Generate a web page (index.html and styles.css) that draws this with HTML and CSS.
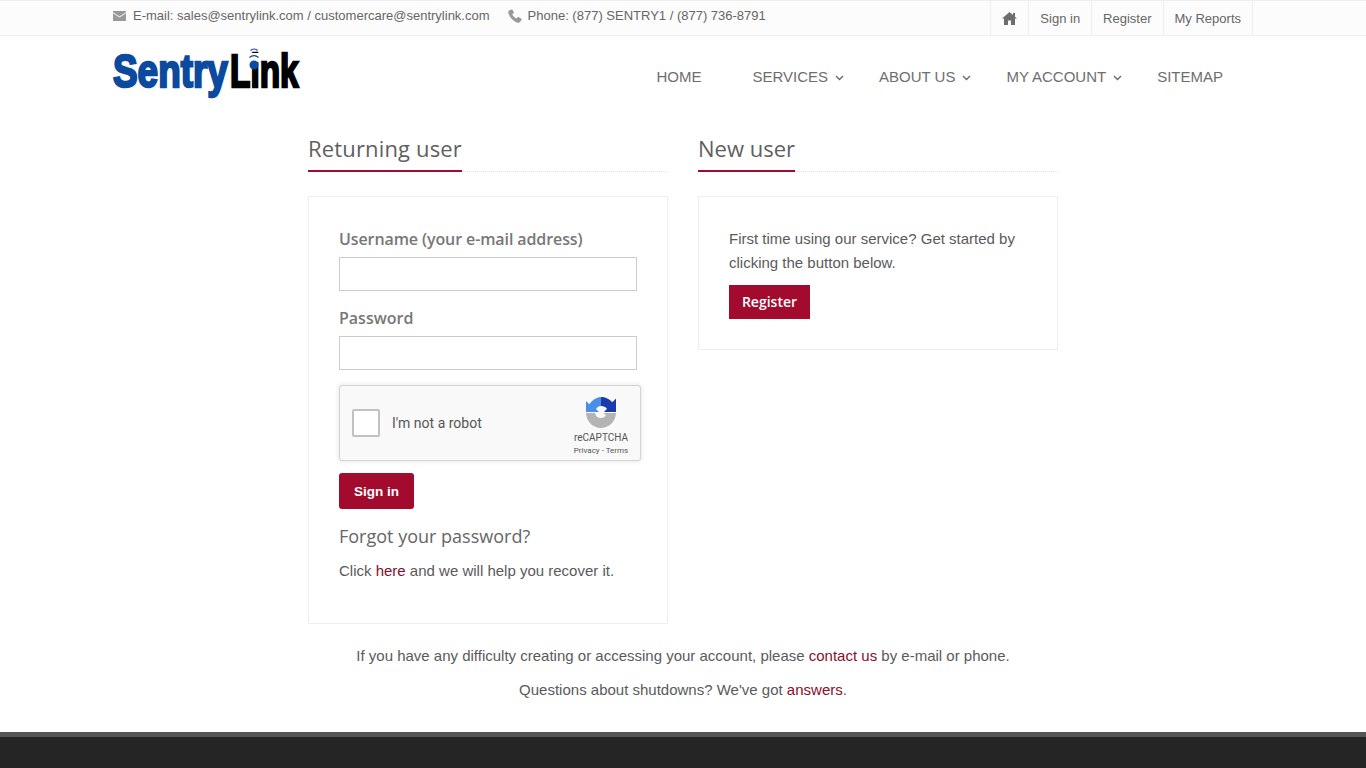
FILE: index.html
```html
<!DOCTYPE html>
<html lang="en">
<head>
<meta charset="utf-8">
<title>SentryLink - Sign in</title>
<link rel="stylesheet" href="styles.css">
</head>
<body>
<div class="topbar">
  <div class="wrap topbar-inner">
    <div class="contact">
      <span class="contact-item">
        <svg class="ic-mail" viewBox="0 0 13 10" width="13" height="10"><path d="M0 0h13v1.200L6.500 5.400 0 1.200z"/><path d="M0 2.300l6.500 4.300L13 2.300V10H0z"/></svg>
        E-mail: sales@sentrylink.com / customercare@sentrylink.com
      </span>
      <span class="contact-item">
        <svg class="ic-phone" viewBox="0 0 14 14" width="14" height="14"><path d="M3.400.400 1 1.600C.3 2.100 0 3 .3 3.900c1.400 4.400 5.100 8.300 9.500 9.800.9.300 1.800 0 2.300-.7l1.500-2.300c.2-.3.100-.7-.2-.9L10.600 8c-.3-.2-.6-.1-.8.100L8.500 9.500C6.600 8.500 5.300 7.200 4.300 5.200l1.400-1.300c.2-.2.300-.6.100-.8L4.200.6C4 0 3.700.2 3.400.4z"/></svg>
        Phone: (877) SENTRY1 / (877) 736-8791
      </span>
    </div>
    <nav class="toplinks">
      <a class="toplink" href="#" aria-label="Home"><svg class="ic-home" viewBox="0 0 15 13" width="15" height="13"><path d="M7.500 0 11 3V1h2v3.700l2 1.800h-2V13H9V8.500H6V13H2V6.500H0z"/></svg></a>
      <a class="toplink" href="#">Sign in</a>
      <a class="toplink" href="#">Register</a>
      <a class="toplink" href="#">My Reports</a>
    </nav>
  </div>
</div>

<header class="wrap header">
  <a class="logo" href="#">
    <span class="logo-text logo-blue">Sentry</span>
    <span class="logo-text logo-black">Link</span>
    <svg class="logo-signal" viewBox="0 0 14 26" width="14" height="26">
      <rect class="logo-mask" x="2" y="6" width="10" height="9"/>
      <circle class="logo-dot" cx="7" cy="18" r="4.500"/>
      <path class="logo-arc" d="M2.500 10.500a6.500 6.500 0 0 1 9 0"/>
      <path class="logo-arc" d="M3.500 3.500a5 5 0 0 1 7 0"/>
    </svg>
  </a>
  <nav class="mainnav">
    <a href="#" class="navitem nav-home">HOME</a>
    <a href="#" class="navitem nav-gap">SERVICES<svg class="chev" viewBox="0 0 9 6" width="9" height="6"><path d="M1 1l3.500 3.500L8 1"/></svg></a>
    <a href="#" class="navitem nav-gap">ABOUT US<svg class="chev" viewBox="0 0 9 6" width="9" height="6"><path d="M1 1l3.500 3.500L8 1"/></svg></a>
    <a href="#" class="navitem nav-gap">MY ACCOUNT<svg class="chev" viewBox="0 0 9 6" width="9" height="6"><path d="M1 1l3.500 3.500L8 1"/></svg></a>
    <a href="#" class="navitem">SITEMAP</a>
  </nav>
</header>

<main class="main">
  <div class="columns">
    <section class="col">
      <div class="heading"><h2 class="h-wide">Returning user</h2></div>
      <div class="box box-login">
        <label class="label" for="u">Username (your e-mail address)</label>
        <input class="input" id="u" type="text">
        <label class="label label-pass" for="p">Password</label>
        <input class="input" id="p" type="password">
        <div class="captcha">
          <span class="cap-check"></span>
          <span class="cap-text">I'm not a robot</span>
          <div class="cap-brand">
            <svg class="cap-logo" viewBox="0 0 30 31" width="30" height="31">
              <path fill="#b4b4b4" d="M0 16h9c.5 3 3 5 6 5 2 0 3.800-1 5-2.500L17.500 16H30c-.3 8.500-7 15-15 15S.3 24.500 0 16z"/>
              <path fill="#4a8ee8" d="M0 15V4l3.300 3.300C6 3.400 10 .5 15 0v9c-2.500 0-4.300 1.500-5 3l3 3z"/>
              <path fill="#1c3aa9" d="M15 0c4.500 0 8.500 2 11.300 5.200L30 1.500V15H18l3-3.200C19.800 10 17.500 9 15 9z"/>
            </svg>
            <span class="cap-name">reCAPTCHA</span>
            <span class="cap-links">Privacy - Terms</span>
          </div>
        </div>
        <button class="btn-signin" type="button">Sign in</button>
        <h3 class="forgot">Forgot your password?</h3>
        <p class="recover">Click <a href="#">here</a> and we will help you recover it.</p>
      </div>
    </section>
    <section class="col">
      <div class="heading"><h2>New user</h2></div>
      <div class="box box-new">
        <p class="intro">First time using our service? Get started by clicking the button below.</p>
        <a class="btn-register" href="#">Register</a>
      </div>
    </section>
  </div>
  <p class="note note-first">If you have any difficulty creating or accessing your account, please <a href="#">contact us</a> by e-mail or phone.</p>
  <p class="note">Questions about shutdowns? We've got <a href="#">answers</a>.</p>
</main>

<footer class="footer"></footer>
</body>
</html>
```
FILE: styles.css
```css
* { box-sizing: border-box; }
html, body { margin: 0; padding: 0; height: 768px; overflow: hidden; }
body {
  background: #fff;
  color: #5a5a5a;
  font-family: "Liberation Sans", Arial, sans-serif;
  font-size: 14px;
}
a { color: inherit; text-decoration: none; }
.wrap { width: 1140px; margin: 0 auto; }

.topbar {
  height: 36px;
  background: #fcfcfc;
  border-top: 1px solid #eee;
  border-bottom: 1px solid #eee;
}
.topbar-inner { display: flex; justify-content: space-between; height: 34px; }
.contact { display: flex; gap: 18px; padding-top: 7px; line-height: 16px; color: #666; font-size: 13px; }
.contact-item { display: flex; align-items: center; gap: 7px; height: 16px; white-space: nowrap; }
.contact-item .ic-phone { margin-right: -1px; }
.contact svg { fill: #999; flex: none; margin-top: -1px; }
.toplinks { display: flex; border-right: 1px solid #eee; }
.toplink {
  display: flex; align-items: center; padding: 0 11px;
  border-left: 1px solid #eee;
  color: #666; font-size: 13px;
}
.ic-home { fill: #6d6d6d; }

.header { display: flex; justify-content: space-between; height: 80px; }
.logo { position: relative; display: block; width: 187px; height: 60px; }
.logo-text {
  position: absolute; top: 7px;
  font-size: 47px; line-height: 56px; font-weight: 700;
  -webkit-text-stroke: 2.400px currentColor;
  white-space: nowrap;
  transform-origin: 0 0;
}
.logo-blue { left: 0; color: #0b4a9e; transform: scaleX(.785); }
.logo-black { left: 117px; color: #000; transform: scaleX(.71); }
.logo-signal { position: absolute; left: 134px; top: 11px; }
.logo-mask { fill: #fff; }
.logo-dot { fill: #0b4a9e; }
.logo-arc { fill: none; stroke: #0b4a9e; stroke-width: 1.300; }

.mainnav { display: flex; padding-right: 30px; padding-top: 32px; color: #6e6e6e; font-size: 15px; line-height: 17px; }
.navitem { display: flex; align-items: center; height: 17px; white-space: nowrap; }
.nav-home { margin-right: 51px; }
.nav-gap { margin-right: 35px; }
.chev { margin-left: 7px; margin-top: 3px; fill: none; stroke: #666; stroke-width: 1.300; }

.main { width: 750px; margin: 0 auto; }
.columns { display: flex; gap: 30px; align-items: flex-start; }
.col { width: 360px; }
.heading {
  height: 56px;
  border-bottom: 1px dotted #e6e6e6;
  margin-bottom: 24px;
}
.heading h2 {
  display: inline-block;
  margin: 0;
  height: 56px;
  padding-top: 17px;
  font: 400 22px/30px "Open Sans", sans-serif;
  color: #5f5f5f;
  border-bottom: 2px solid #a20b2d;
}
.heading .h-wide { letter-spacing: .16px; }
.box { border: 1px solid #eee; padding: 30px; background: #fff; }
.box-login { height: 428px; }
.box-new { height: 154px; }

.label {
  display: block;
  font: 600 16px/24px "Open Sans", sans-serif;
  letter-spacing: -.1px;
  color: #777;
  margin-bottom: 6px;
}
.label-pass { margin-top: 15px; letter-spacing: 0; }
.input {
  display: block; width: 298px; height: 34px;
  border: 1px solid #ccc; background: #fff; padding: 0 10px;
}
.captcha {
  position: relative;
  display: flex; align-items: center;
  width: 302px; height: 76px;
  margin-top: 15px;
  background: #f9f9f9;
  border: 1px solid #d3d3d3;
  border-radius: 3px;
  box-shadow: 0 0 4px 1px rgba(0,0,0,.08);
  padding-left: 12px;
  font-family: Roboto, sans-serif;
}
.cap-check {
  width: 28px; height: 28px;
  background: #fff; border: 2px solid #c1c1c1; border-radius: 2px;
}
.cap-text { margin-left: 12px; font-size: 14px; color: #555; }
.cap-brand {
  position: absolute; right: 10px; top: 11px; width: 58px;
  display: flex; flex-direction: column; align-items: center;
  color: #555;
}
.cap-logo { display: block; margin-bottom: 3px; }
.cap-name { font-size: 10px; line-height: 13px; white-space: nowrap; }
.cap-links { font-size: 8px; line-height: 12px; white-space: nowrap; margin-top: 1px; }
.btn-signin {
  display: block;
  width: 75px; height: 36px;
  margin-top: 12px;
  border: 0; border-radius: 3px;
  background: #a20b2d; color: #fff;
  font: 700 13.500px "Liberation Sans", Arial, sans-serif;
  padding: 0;
}
.forgot {
  margin: 14px 0 0;
  font: 400 18px/26px "Open Sans", sans-serif;
  color: #666;
}
.recover { margin: 10px 0 0; font-size: 15px; line-height: 24px; color: #5a5a5a; }
.recover a, .note a { color: #8a0d2c; }

.intro { margin: 0; font-size: 15px; line-height: 24px; color: #5a5a5a; }
.btn-register {
  display: inline-block;
  width: 81px; height: 34px;
  margin-top: 10px;
  background: #a20b2d; color: #fff;
  font: 600 14px/34px "Open Sans", sans-serif;
  text-align: center;
}
.note { margin: 10px 0 0; text-align: center; font-size: 15px; line-height: 24px; color: #5a5a5a; }
.note-first { margin-top: 20px; }

.footer {
  position: fixed; left: 0; right: 0; top: 732px; height: 36px;
  background: #252525;
  border-top: 5px solid #555;
}
```
